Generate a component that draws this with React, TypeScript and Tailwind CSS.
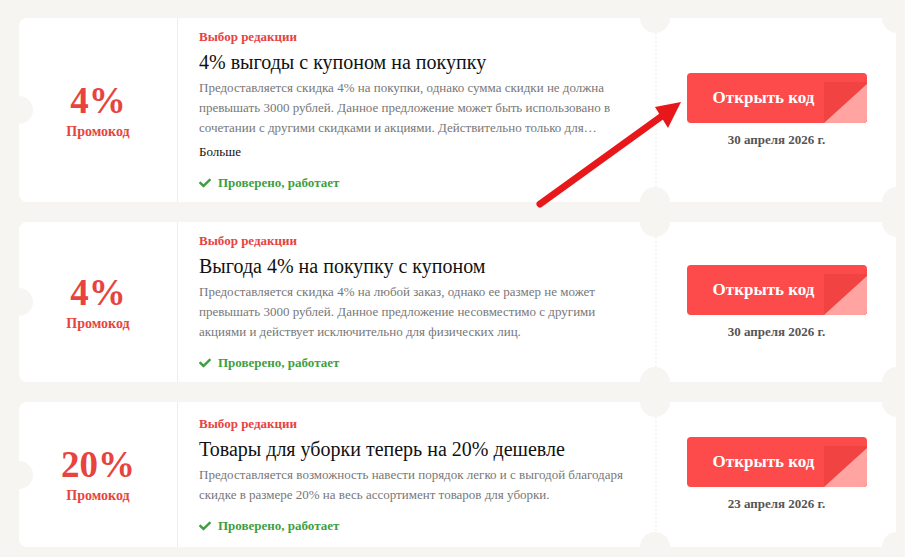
import { FaCheck } from "react-icons/fa";

const coupons = [
  {
    value: "4%",
    title: "4% выгоды с купоном на покупку",
    text: "Предоставляется скидка 4% на покупки, однако сумма скидки не должна превышать 3000 рублей. Данное предложение может быть использовано в сочетании с другими скидками и акциями. Действительно только для физических лиц и при оплате онлайн.",
    more: true,
    date: "30 апреля 2026 г.",
  },
  {
    value: "4%",
    title: "Выгода 4% на покупку с купоном",
    text: "Предоставляется скидка 4% на любой заказ, однако ее размер не может превышать 3000 рублей. Данное предложение несовместимо с другими акциями и действует исключительно для физических лиц.",
    more: false,
    date: "30 апреля 2026 г.",
  },
  {
    value: "20%",
    title: "Товары для уборки теперь на 20% дешевле",
    text: "Предоставляется возможность навести порядок легко и с выгодой благодаря скидке в размере 20% на весь ассортимент товаров для уборки.",
    more: false,
    date: "23 апреля 2026 г.",
  },
];

function Notch({ className }: { className: string }) {
  return <div className={`absolute w-[30px] h-[30px] rounded-full bg-[#f6f5f1] ${className}`} />;
}

function CouponCard({ c }: { c: (typeof coupons)[number] }) {
  return (
    <div className="relative flex bg-white rounded-[8px] min-h-[145px]">
      {/* ticket cut-outs */}
      <div className="absolute left-[-14px] top-1/2 -translate-y-1/2 w-[28px] h-[28px] rounded-full bg-[#f6f5f1]" />
      <Notch className="right-[226px] top-[-15px]" />
      <Notch className="right-[226px] bottom-[-15px]" />
      <Notch className="right-[-16px] top-[-15px]" />
      <Notch className="right-[-16px] bottom-[-15px]" />

      {/* value */}
      <div className="w-[159px] shrink-0 flex flex-col items-center justify-center border-r border-[#ededed] pt-[4px]">
        <div className="text-[37px] leading-[36px] font-bold text-[#e8433f]">{c.value}</div>
        <div className="mt-[3px] text-[14px] leading-[20px] font-bold text-[#e8433f]">Промокод</div>
      </div>

      {/* description */}
      <div className="flex-1 flex flex-col justify-center pl-[21px] pr-[20px] pt-[10px] pb-[9px]">
        <div className="text-[13px] leading-[18px] font-bold text-[#e8433f]">Выбор редакции</div>
        <div className="mt-[4px] text-[20px] leading-[24px] text-[#111]">{c.title}</div>
        <p className="mt-[4px] text-[13px] leading-[20px] text-[#777] line-clamp-3">{c.text}</p>
        {c.more && <div className="mt-[4px] text-[13px] leading-[20px] text-[#111]">Больше</div>}
        <div className="mt-[11px] flex items-center gap-[7px] text-[13px] leading-[20px] font-bold text-[#3f9f3f]">
          <FaCheck className="w-[12px] h-[12px]" />
          Проверено, работает
        </div>
      </div>

      {/* action */}
      <div className="w-[241px] shrink-0 flex flex-col items-center justify-center border-l-2 border-dotted border-[#f6f6f4]">
        <button className="relative w-[180px] h-[50px] rounded-[4px] bg-[#fd4a4a] overflow-hidden pr-[26px] text-white text-[17px] font-bold">
          <svg className="absolute right-0 top-0" width="43" height="50" viewBox="0 0 43 50">
            <rect x="0" y="9" width="43" height="41" fill="#f24343" />
            <polygon points="0,50 43,11 43,50" fill="#ffa4a1" />
          </svg>
          <span className="relative">Открыть код</span>
        </button>
        <div className="mt-[9px] text-[13px] leading-[16px] font-bold text-[#555]">{c.date}</div>
      </div>
    </div>
  );
}

export default function App() {
  return (
    <div
      className="relative w-[905px] h-[557px] overflow-hidden bg-[#f6f5f1] pt-[18px] pl-[19px] pr-[9px]"
      style={{ fontFamily: '"Liberation Serif", "Times New Roman", serif' }}
    >
      <div className="flex flex-col gap-5">
        {coupons.map((c) => (
          <CouponCard key={c.title} c={c} />
        ))}
      </div>

      {/* annotation arrow */}
      <svg className="absolute left-0 top-0 pointer-events-none" width="905" height="557">
        <line x1="540" y1="204" x2="662" y2="116" stroke="#e8171a" strokeWidth="7" strokeLinecap="round" />
        <polygon points="681,102 655,107 668,128" fill="#e8171a" />
      </svg>
    </div>
  );
}
